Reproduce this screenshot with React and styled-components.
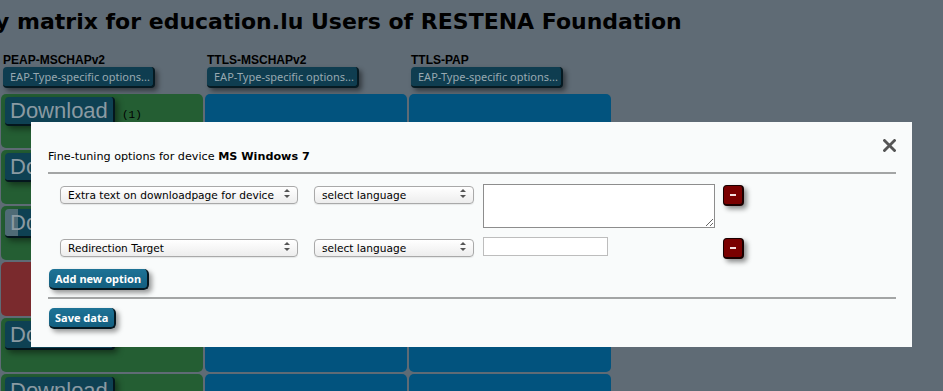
import React from "react";
import styled, { createGlobalStyle } from "styled-components";

const GlobalStyle = createGlobalStyle`
  html, body { margin: 0; padding: 0; }
  body {
    background: #5f6b75;
    width: 943px;
    height: 391px;
    overflow: hidden;
    font-family: "Liberation Sans", Arial, sans-serif;
  }
`;

const Page = styled.div`
  position: relative;
  width: 943px;
  height: 391px;
  overflow: hidden;
`;

const Heading = styled.h1`
  margin: 0;
  padding-top: 8px;
  text-indent: -5px;
  white-space: nowrap;
  font-family: "DejaVu Sans", Verdana, sans-serif;
  font-weight: bold;
  font-size: 22px;
  line-height: 28px;
  color: #000;
`;

const Matrix = styled.div`
  display: grid;
  grid-template-columns: repeat(3, 202px);
  column-gap: 2px;
  row-gap: 2px;
  margin: 18px 0 0 1px;
`;

const HeadCell = styled.div`
  padding: 0 2px 4px;
  display: flex;
  flex-direction: column;
  align-items: flex-start;
`;

const HeadLabel = styled.div`
  font-family: "Liberation Sans", Arial, sans-serif;
  font-weight: bold;
  font-size: 12px;
  line-height: 13px;
  color: #000;
`;

const EapButton = styled.div`
  box-sizing: border-box;
  width: 152px;
  height: 21px;
  background: #0f3d50;
  border-radius: 4px;
  border-right: 2px solid #061a22;
  border-bottom: 2px solid #061a22;
  box-shadow: 3px 3px 5px rgba(0, 0, 0, 0.45);
  color: #98a9b0;
  font-family: "Noto Sans", sans-serif;
  font-size: 11px;
  line-height: 19px;
  padding-left: 7px;
  white-space: nowrap;
`;

const cellColors = {
  green: "#245e33",
  blue: "#02537e",
  red: "#7a2a2d",
};

const Cell = styled.div`
  height: 54px;
  box-sizing: border-box;
  border-radius: 5px;
  background: ${(p) => cellColors[p.$tone]};
  padding: 3px 4px;
  display: flex;
  align-items: flex-start;
`;

const DownloadButton = styled.div`
  box-sizing: border-box;
  width: 110px;
  height: 29px;
  border-radius: 4px;
  background: ${(p) =>
    p.$hover
      ? "linear-gradient(to right, #4f6b76 0 13px, #0e4153 13px)"
      : "#0e4153"};
  border-right: 2px solid #04161d;
  border-bottom: 2px solid #04161d;
  box-shadow: 3px 3px 6px rgba(0, 0, 0, 0.45);
  color: #8a9aa2;
  font-family: "Liberation Sans", Arial, sans-serif;
  font-size: 22px;
  line-height: 27px;
  padding-left: 5px;
`;

const Count = styled.span`
  font-family: "Liberation Mono", monospace;
  font-size: 11px;
  color: #000;
  margin: 12px 0 0 7px;
`;

const Modal = styled.div`
  position: absolute;
  left: 31px;
  top: 122px;
  width: 881px;
  height: 225px;
  box-sizing: border-box;
  background: #f9fbfb;
  padding: 24px 16px 0 17px;
  font-family: "DejaVu Sans", Verdana, sans-serif;
  color: #000;
`;

const CloseButton = styled.div`
  position: absolute;
  right: 16px;
  top: 17px;
  width: 13px;
  height: 13px;
  display: flex;
`;

const Title = styled.div`
  font-size: 11.2px;
  line-height: 16px;
  padding-top: 3px;
  & b { font-weight: bold; }
`;

const Rule = styled.div`
  height: 0;
  border-top: 2px solid #a3a5a5;
  margin: ${(p) => p.$margin};
`;

const OptionsGrid = styled.div`
  display: grid;
  grid-template-columns: 254px 169px 240px 21px;
  row-gap: 9px;
  margin-left: 12px;
  align-items: start;
`;

const SelectWrap = styled.div`
  position: relative;
  width: ${(p) => p.$width}px;
  height: 18px;
`;

const Select = styled.select`
  appearance: none;
  -webkit-appearance: none;
  box-sizing: border-box;
  width: 100%;
  height: 18px;
  margin: 0;
  border: 1px solid #a9a9a9;
  border-radius: 4px;
  background: linear-gradient(#ffffff, #ededed);
  font-family: "DejaVu Sans", Verdana, sans-serif;
  font-size: 10.6px;
  color: #000;
  padding: 0 18px 0 7px;
  line-height: 16px;
  box-shadow: 0 1px 1px rgba(0, 0, 0, 0.08);
`;

const Arrows = styled.svg`
  position: absolute;
  right: 8px;
  top: 5px;
  pointer-events: none;
`;

const TextArea = styled.textarea`
  box-sizing: border-box;
  width: 232px;
  height: 44px;
  margin: 0;
  border: 1px solid #8d8d8d;
  background: #fff;
  resize: both;
  padding: 2px;
`;

const TextInput = styled.input`
  box-sizing: border-box;
  width: 125px;
  height: 19px;
  margin: 0;
  border: 1px solid #bdbdbd;
  background: #fff;
  padding: 0 2px;
`;

const MinusButton = styled.div`
  box-sizing: border-box;
  width: 21px;
  height: 21px;
  margin-top: 1px;
  border-radius: 4px;
  background: #7a0000;
  border: 1px solid #1a0000;
  border-right-width: 2px;
  border-bottom-width: 2px;
  box-shadow: 3px 3px 5px rgba(0, 0, 0, 0.45);
  display: flex;
  align-items: center;
  justify-content: center;
  &::after {
    content: "";
    width: 6px;
    height: 2px;
    background: #f3dede;
  }
`;

const ActionButton = styled.div`
  display: inline-block;
  box-sizing: border-box;
  height: 21px;
  padding: 0 6px;
  border-radius: 5px;
  background: linear-gradient(#1e7396, #135f80);
  border-right: 2px solid #061820;
  border-bottom: 2px solid #061820;
  box-shadow: 3px 3px 5px rgba(0, 0, 0, 0.4);
  color: #fff;
  font-family: "Noto Sans", sans-serif;
  font-weight: bold;
  font-size: 11px;
  line-height: 19px;
  margin: ${(p) => p.$margin};
`;

const columns = [
  { label: "PEAP-MSCHAPv2" },
  { label: "TTLS-MSCHAPv2" },
  { label: "TTLS-PAP" },
];

const rows = [
  { tone: "green", download: true, count: "(1)" },
  { tone: "green", download: true },
  { tone: "green", download: true, hover: true },
  { tone: "red", download: false },
  { tone: "green", download: true },
  { tone: "green", download: true },
];

const UpDown = () => (
  <Arrows width="6" height="9" viewBox="0 0 6 9">
    <path d="M3 0 L6 3 L0 3 Z" fill="#555" />
    <path d="M3 9 L6 6 L0 6 Z" fill="#555" />
  </Arrows>
);

const FakeSelect = ({ value, width }) => (
  <SelectWrap $width={width}>
    <Select defaultValue={value}>
      <option>{value}</option>
    </Select>
    <UpDown />
  </SelectWrap>
);

export default function App() {
  return (
    <Page>
      <GlobalStyle />
      <Heading>y matrix for education.lu Users of RESTENA Foundation</Heading>
      <Matrix>
        {columns.map((c) => (
          <HeadCell key={c.label}>
            <HeadLabel>{c.label}</HeadLabel>
            <EapButton>EAP-Type-specific options...</EapButton>
          </HeadCell>
        ))}
        {rows.map((r, i) => (
          <React.Fragment key={i}>
            <Cell $tone={r.tone}>
              {r.download && <DownloadButton $hover={r.hover}>Download</DownloadButton>}
              {r.count && <Count>{r.count}</Count>}
            </Cell>
            <Cell $tone="blue" />
            <Cell $tone="blue" />
          </React.Fragment>
        ))}
      </Matrix>

      <Modal>
        <CloseButton>
          <svg width="13" height="13" viewBox="0 0 13 13">
            <path d="M1.5 1.5 L11.5 11.5 M11.5 1.5 L1.5 11.5" stroke="#555" strokeWidth="2.8" strokeLinecap="square" />
          </svg>
        </CloseButton>
        <Title>
          Fine-tuning options for device <b>MS Windows 7</b>
        </Title>
        <Rule $margin="7px 0 10px" />
        <OptionsGrid>
          <FakeSelect width={238} value="Extra text on downloadpage for device" />
          <FakeSelect width={160} value="select language" />
          <TextArea />
          <MinusButton />
          <FakeSelect width={238} value="Redirection Target" />
          <FakeSelect width={160} value="select language" />
          <TextInput type="text" />
          <MinusButton />
        </OptionsGrid>
        <ActionButton $margin="10px 0 0 1px">Add new option</ActionButton>
        <Rule $margin="7px 0 8px" />
        <ActionButton $margin="0 0 0 1px">Save data</ActionButton>
      </Modal>
    </Page>
  );
}
